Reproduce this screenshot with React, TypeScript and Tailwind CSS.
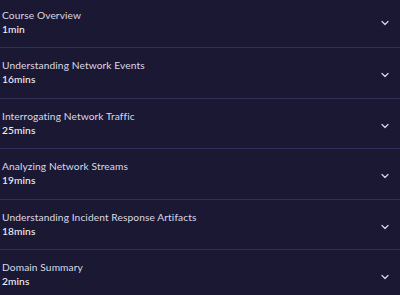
import { ChevronDown } from "lucide-react";

type Lesson = {
	title: string;
	duration: string;
};

const lessons: Lesson[] = [
	{ title: "Course Overview", duration: "1min" },
	{ title: "Understanding Network Events", duration: "16mins" },
	{ title: "Interrogating Network Traffic", duration: "25mins" },
	{ title: "Analyzing Network Streams", duration: "19mins" },
	{ title: "Understanding Incident Response Artifacts", duration: "18mins" },
	{ title: "Domain Summary", duration: "2mins" },
];

function LessonRow({ lesson, first }: { lesson: Lesson; first: boolean }) {
	return (
		<div
			className={
				first
					? "flex h-[48px] shrink-0 items-start justify-between border-b border-[#332f5a] pl-[2px] pr-[9px] pt-[8px]"
					: "flex h-[50.5px] shrink-0 items-start justify-between border-b border-[#332f5a] pl-[2px] pr-[9px] pt-[10px]"
			}
		>
			<div className="flex flex-col tracking-[0.1px]">
				<span className="text-[10.2px] leading-[14px] text-[#dad9e5]">{lesson.title}</span>
				<span className="text-[10.2px] font-medium leading-[14px] text-[#f0f0f6]">{lesson.duration}</span>
			</div>
			<ChevronDown size={12} strokeWidth={2.5} className={first ? "mt-[9px] text-[#d4d3e2]" : "mt-[11px] text-[#d4d3e2]"} />
		</div>
	);
}

export default function App() {
	return (
		<div className="flex h-[295px] w-[400px] flex-col overflow-hidden bg-[#1b1834] font-['Lato',sans-serif]">
			{lessons.map((lesson, i) => (
				<LessonRow key={lesson.title} lesson={lesson} first={i === 0} />
			))}
		</div>
	);
}
